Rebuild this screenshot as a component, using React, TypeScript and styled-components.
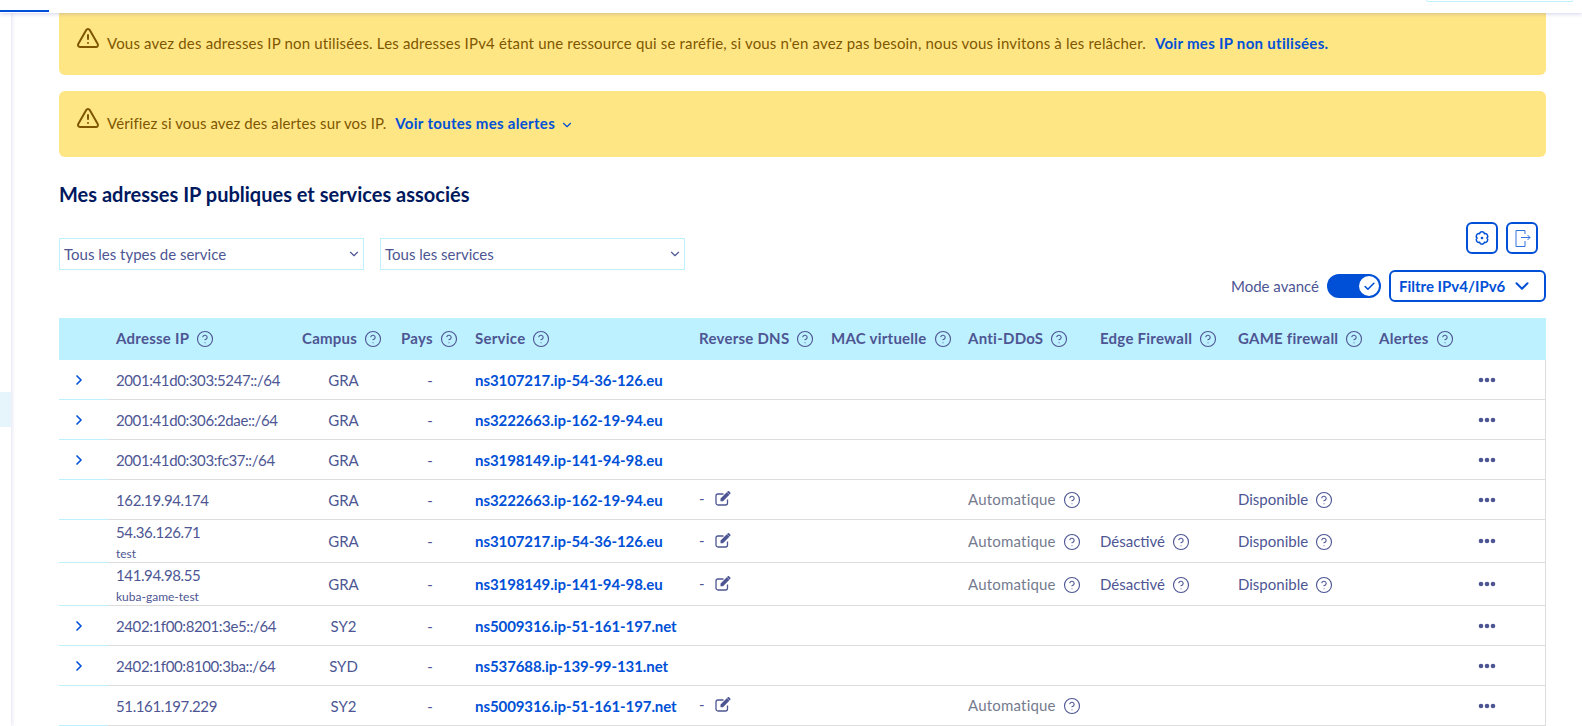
import React from "react";
import styled, { createGlobalStyle } from "styled-components";
import { Check, ChevronDown, ChevronRight, CircleHelp, TriangleAlert } from "lucide-react";

const BLUE = "#0050d7";
const TEXT = "#4d5693";

const GlobalStyle = createGlobalStyle`
  html, body {
    margin: 0;
    height: 100%;
    overflow: hidden;
    background: #fff;
    font-family: "Lato", "Noto Sans", sans-serif;
    color: ${TEXT};
  }
`;

const Page = styled.div`
  height: 726px;
  display: flex;
  flex-direction: column;
  overflow: hidden;
`;

const TopBar = styled.header`
  height: 13px;
  flex: none;
  display: flex;
  justify-content: space-between;
  padding-right: 9px;
  background: #fff;
  box-shadow: 0 1px 4px rgba(0, 14, 156, 0.18);
  position: relative;
  z-index: 2;
`;

const ActiveTab = styled.div`
  width: 49px;
  height: 2px;
  margin-top: 10px;
  background: ${BLUE};
`;

const SearchEdge = styled.div`
  width: 145px;
  height: 1px;
  border: 1px solid #bef1ff;
  border-top: 0;
  border-radius: 0 0 4px 4px;
`;

const Body = styled.div`
  flex: 1;
  display: flex;
  min-height: 0;
`;

const Sidebar = styled.nav`
  width: 11px;
  flex: none;
  padding-top: 379px;
  background: #fff;
  box-shadow: 1px 0 4px rgba(0, 14, 156, 0.12);
`;

const SidebarItem = styled.div`
  height: 35px;
  background: #e6f4fb;
`;

const Main = styled.main`
  flex: 1;
  min-width: 0;
  padding: 0 36px 0 48px;
`;

const Alert = styled.div<{ $height: number; $flat?: boolean }>`
  height: ${(p) => p.$height}px;
  margin-bottom: 16px;
  padding: 0 17px;
  display: flex;
  align-items: center;
  gap: 7px;
  background: #ffe685;
  border-radius: ${(p) => (p.$flat ? "0 0 6px 6px" : "6px")};
  color: #7f5600;
  font-size: 15px;
`;

const AlertIcon = styled(TriangleAlert)`
  flex: none;
  margin-bottom: 12px;
  color: #7f5600;
`;

const AlertText = styled.span<{ $tight?: boolean }>`
  margin-bottom: 2px;
  letter-spacing: ${(p) => (p.$tight ? "0.1px" : "0.17px")};
`;

const AlertLink = styled.a`
  margin-left: 9px;
  color: ${BLUE};
  font-weight: 700;
  letter-spacing: 0.3px;
`;

const SmallChevron = styled(ChevronDown)`
  margin-left: 5px;
  vertical-align: -3px;
`;

const Heading = styled.h2`
  margin: 25px 0 16px;
  font-size: 20px;
  line-height: 24px;
  font-weight: 700;
  color: #00185e;
`;

const Toolbar = styled.div`
  display: flex;
  justify-content: space-between;
  margin-bottom: 16px;
`;

const Selects = styled.div`
  display: flex;
  gap: 16px;
  padding-top: 16px;
`;

const FakeSelect = styled.div`
  width: 305px;
  height: 32px;
  box-sizing: border-box;
  padding: 0 2px 0 4px;
  display: flex;
  align-items: center;
  justify-content: space-between;
  border: 1px solid #bef1ff;
  font-size: 15px;
`;

const Controls = styled.div`
  display: flex;
  flex-direction: column;
  align-items: flex-end;
  gap: 16px;
`;

const IconButtons = styled.div`
  display: flex;
  gap: 8px;
  padding-right: 8px;
`;

const IconButton = styled.button`
  width: 32px;
  height: 32px;
  padding: 0;
  display: flex;
  align-items: center;
  justify-content: center;
  background: #fff;
  border: 2px solid ${BLUE};
  border-radius: 6px;
  color: ${BLUE};
`;

const FilterRow = styled.div`
  display: flex;
  align-items: center;
  gap: 8px;
  font-size: 15px;
`;

const Toggle = styled.div`
  width: 54px;
  height: 24px;
  box-sizing: border-box;
  padding: 2px;
  display: flex;
  justify-content: flex-end;
  background: ${BLUE};
  border-radius: 12px;
`;

const Knob = styled.div`
  width: 20px;
  height: 20px;
  display: flex;
  align-items: center;
  justify-content: center;
  background: #fff;
  border-radius: 50%;
  color: ${BLUE};
`;

const FilterButton = styled.button`
  width: 157px;
  height: 32px;
  padding: 0 11px 0 8px;
  display: flex;
  align-items: center;
  justify-content: space-between;
  background: #fff;
  border: 2px solid ${BLUE};
  border-radius: 6px;
  color: ${BLUE};
  font: 700 15px "Lato", "Noto Sans", sans-serif;
`;

const Table = styled.table`
  width: 100%;
  table-layout: fixed;
  border-collapse: separate;
  border-spacing: 0;
  font-size: 15px;
`;

const Th = styled.th`
  height: 42px;
  box-sizing: border-box;
  padding: 0 8px 2px;
  background: #bef1ff;
  font-weight: 700;
  letter-spacing: 0.25px;
  text-align: left;
  white-space: nowrap;
`;

const Td = styled.td<{ $center?: boolean; $grey?: boolean; $first?: boolean; $last?: boolean }>`
  box-sizing: border-box;
  padding: ${(p) => (p.$last ? "0 40px 0 8px" : "0 8px")};
  border-bottom: 1px solid ${(p) => (p.$first ? "#bef1ff" : "#ddd")};
  border-right: ${(p) => (p.$last ? "1px solid #ddd" : "0")};
  text-align: ${(p) => (p.$center ? "center" : "left")};
  color: ${(p) => (p.$grey ? "#757b8f" : TEXT)};
  letter-spacing: ${(p) => (p.$grey ? "0.2px" : "0")};
  white-space: nowrap;
`;

const Row = styled.tr<{ $height: number }>`
  height: ${(p) => p.$height}px;
`;

const Help = styled(CircleHelp)`
  margin-left: 7px;
  vertical-align: -4px;
  color: ${TEXT};
`;

const Expander = styled(ChevronRight)`
  display: block;
  margin-left: 4px;
  color: ${BLUE};
`;

const IpCell = styled.div<{ $note?: boolean }>`
  padding-top: ${(p) => (p.$note ? "2px" : "0")};
`;

const IpLine = styled.div<{ $block?: boolean }>`
  line-height: 20px;
  letter-spacing: ${(p) => (p.$block ? "-0.4px" : "-0.38px")};
`;

const IpNote = styled.div`
  margin-top: 4px;
  font-size: 12px;
  line-height: 16px;
`;

const ServiceLink = styled.a`
  color: ${BLUE};
  font-weight: 700;
  letter-spacing: -0.08px;
`;

const Dash = styled.span`
  vertical-align: 3px;
`;

const EditSvg = styled.svg`
  margin-left: 10px;
  vertical-align: 1px;
  color: ${TEXT};
`;

const DotsSvg = styled.svg`
  display: block;
  margin: 0 auto;
`;

const widths = [49, 186, 99, 74, 224, 132, 137, 132, 138, 141, 89, 86];
const headers = [
  "",
  "Adresse IP",
  "Campus",
  "Pays",
  "Service",
  "Reverse DNS",
  "MAC virtuelle",
  "Anti-DDoS",
  "Edge Firewall",
  "GAME firewall",
  "Alertes",
  "",
];

interface IpRow {
  ip: string;
  note?: string;
  campus: string;
  service: string;
  block?: boolean;
  edge?: boolean;
  game?: boolean;
}

const rows: IpRow[] = [
  { ip: "2001:41d0:303:5247::/64", campus: "GRA", service: "ns3107217.ip-54-36-126.eu", block: true },
  { ip: "2001:41d0:306:2dae::/64", campus: "GRA", service: "ns3222663.ip-162-19-94.eu", block: true },
  { ip: "2001:41d0:303:fc37::/64", campus: "GRA", service: "ns3198149.ip-141-94-98.eu", block: true },
  { ip: "162.19.94.174", campus: "GRA", service: "ns3222663.ip-162-19-94.eu", game: true },
  { ip: "54.36.126.71", note: "test", campus: "GRA", service: "ns3107217.ip-54-36-126.eu", edge: true, game: true },
  {
    ip: "141.94.98.55",
    note: "kuba-game-test",
    campus: "GRA",
    service: "ns3198149.ip-141-94-98.eu",
    edge: true,
    game: true,
  },
  { ip: "2402:1f00:8201:3e5::/64", campus: "SY2", service: "ns5009316.ip-51-161-197.net", block: true },
  { ip: "2402:1f00:8100:3ba::/64", campus: "SYD", service: "ns537688.ip-139-99-131.net", block: true },
  { ip: "51.161.197.229", campus: "SY2", service: "ns5009316.ip-51-161-197.net" },
];

function Dots() {
  return (
    <DotsSvg width="18" height="6" viewBox="0 0 18 6" fill={TEXT}>
      <circle cx="3" cy="3" r="2.3" />
      <circle cx="9" cy="3" r="2.3" />
      <circle cx="15" cy="3" r="2.3" />
    </DotsSvg>
  );
}

function EditIcon() {
  return (
    <EditSvg width="16" height="16" viewBox="0 0 16 16">
      <path
        d="M12.5 9.5V13a2 2 0 0 1-2 2H3a2 2 0 0 1-2-2V6a2 2 0 0 1 2-2h5.5"
        fill="none"
        stroke="currentColor"
        strokeWidth="1.3"
      />
      <path
        d="M5.5 8.5 11.8 2.2l2.6 2.6L8 11.2H5.5zM12.6 1.4c.5-.5 1-.5 1.4-.1l1.3 1.3c.4.4.4.9-.1 1.4l-.6.6-2.6-2.6z"
        fill="currentColor"
      />
    </EditSvg>
  );
}

function CogIcon() {
  return (
    <svg width="16" height="16" viewBox="0 0 16 16" fill="none" stroke="currentColor" strokeWidth="1.5">
      <path d="M13 8A2.6 2.6 0 0 1 10.5 12.3 2.6 2.6 0 0 1 5.5 12.3 2.6 2.6 0 0 1 3 8 2.6 2.6 0 0 1 5.5 3.7 2.6 2.6 0 0 1 10.5 3.7 2.6 2.6 0 0 1 13 8Z" />
      <circle cx="8" cy="8" r="1.3" fill="currentColor" stroke="none" />
    </svg>
  );
}

function ExportIcon() {
  return (
    <svg width="20" height="20" viewBox="0 0 20 20" fill="none" stroke="currentColor" strokeWidth="1" opacity="0.8">
      <path d="M13 6V2.5H4v16h9V13" />
      <path d="M9 9.5h9M15.5 7l2.5 2.5L15.5 12" />
    </svg>
  );
}

export default function App() {
  return (
    <Page>
      <GlobalStyle />
      <TopBar>
        <ActiveTab />
        <SearchEdge />
      </TopBar>
      <Body>
        <Sidebar>
          <SidebarItem />
        </Sidebar>
        <Main>
          <Alert $height={62} $flat>
            <AlertIcon size={24} strokeWidth={2} />
            <AlertText>
              Vous avez des adresses IP non utilisées. Les adresses IPv4 étant une ressource qui se raréfie, si vous
              n'en avez pas besoin, nous vous invitons à les relâcher.
              <AlertLink>Voir mes IP non utilisées.</AlertLink>
            </AlertText>
          </Alert>
          <Alert $height={66}>
            <AlertIcon size={24} strokeWidth={2} />
            <AlertText $tight>
              Vérifiez si vous avez des alertes sur vos IP.
              <AlertLink>Voir toutes mes alertes</AlertLink>
              <SmallChevron size={14} color={BLUE} />
            </AlertText>
          </Alert>
          <Heading>Mes adresses IP publiques et services associés</Heading>
          <Toolbar>
            <Selects>
              <FakeSelect>
                Tous les types de service
                <ChevronDown size={14} />
              </FakeSelect>
              <FakeSelect>
                Tous les services
                <ChevronDown size={14} />
              </FakeSelect>
            </Selects>
            <Controls>
              <IconButtons>
                <IconButton>
                  <CogIcon />
                </IconButton>
                <IconButton>
                  <ExportIcon />
                </IconButton>
              </IconButtons>
              <FilterRow>
                Mode avancé
                <Toggle>
                  <Knob>
                    <Check size={13} strokeWidth={3} />
                  </Knob>
                </Toggle>
                <FilterButton>
                  Filtre IPv4/IPv6
                  <ChevronDown size={22} strokeWidth={2.2} />
                </FilterButton>
              </FilterRow>
            </Controls>
          </Toolbar>
          <Table>
            <colgroup>
              {widths.map((w, i) => (
                <col key={i} width={w} />
              ))}
            </colgroup>
            <thead>
              <tr>
                {headers.map((h, i) => (
                  <Th key={i}>
                    {h}
                    {h && <Help size={18} strokeWidth={1.5} />}
                  </Th>
                ))}
              </tr>
            </thead>
            <tbody>
              {rows.map((r) => (
                <Row key={r.ip} $height={r.note ? 43 : 40}>
                  <Td $first>{r.block && <Expander size={16} strokeWidth={2.5} />}</Td>
                  <Td>
                    <IpCell $note={!!r.note}>
                      <IpLine $block={r.block}>{r.ip}</IpLine>
                      {r.note && <IpNote>{r.note}</IpNote>}
                    </IpCell>
                  </Td>
                  <Td $center>{r.campus}</Td>
                  <Td $center>-</Td>
                  <Td>
                    <ServiceLink>{r.service}</ServiceLink>
                  </Td>
                  <Td>
                    {!r.block && (
                      <>
                        <Dash>-</Dash>
                        <EditIcon />
                      </>
                    )}
                  </Td>
                  <Td />
                  <Td $grey>
                    {!r.block && (
                      <>
                        Automatique
                        <Help size={18} strokeWidth={1.5} />
                      </>
                    )}
                  </Td>
                  <Td>
                    {r.edge && (
                      <>
                        Désactivé
                        <Help size={18} strokeWidth={1.5} />
                      </>
                    )}
                  </Td>
                  <Td>
                    {r.game && (
                      <>
                        Disponible
                        <Help size={18} strokeWidth={1.5} />
                      </>
                    )}
                  </Td>
                  <Td />
                  <Td $last $center>
                    <Dots />
                  </Td>
                </Row>
              ))}
            </tbody>
          </Table>
        </Main>
      </Body>
    </Page>
  );
}
